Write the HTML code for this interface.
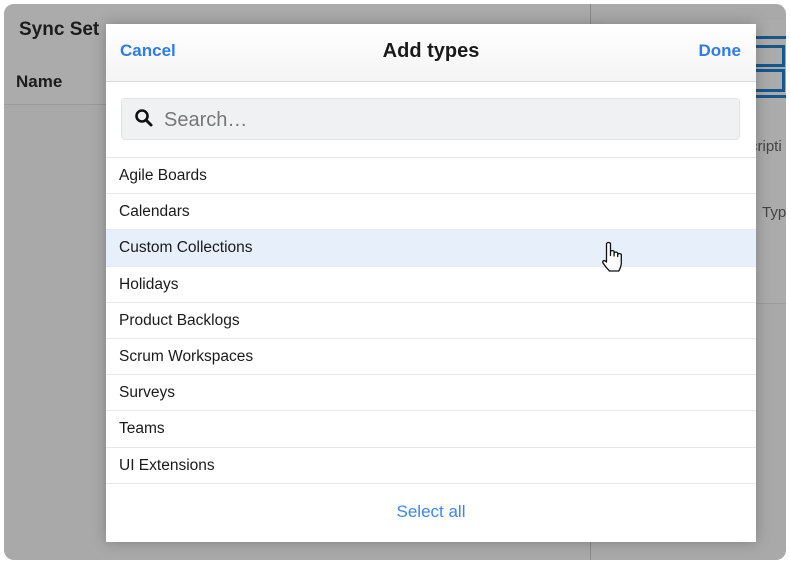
<!DOCTYPE html>
<html><head><meta charset="utf-8"><style>
*{margin:0;padding:0;box-sizing:border-box}
body{width:790px;height:564px;background:#fff;position:relative;overflow:hidden;font-family:"Liberation Sans",Arial,Helvetica,sans-serif}
.win{position:absolute;left:4px;top:4px;width:782px;height:556px;border-radius:10px;background:#a9a9a9;overflow:hidden}
.lh{position:absolute;left:0;top:0;width:586px;height:101px;background:#ababab;border-bottom:1px solid #9a9a9a}
.vl{position:absolute;left:586px;top:0;width:1px;height:556px;background:#8a8a8a}
.card{position:absolute;left:601px;top:16px;width:181px;height:284px;background:#ababab;border-bottom:1px solid #9d9d9d}
.t{position:absolute;color:#1c1c1c}
.bl{position:absolute;background:#17578a}
.bx{position:absolute;border:3px solid #17578a}
.modal{position:absolute;left:106px;top:24px;width:650px;height:518px;background:#fff;box-shadow:0 0 14px rgba(0,0,0,.25)}
.hd{height:58px;border-bottom:1px solid #d8d8d8;background:linear-gradient(#fff,#f4f4f4);position:relative}
.hd span{position:absolute;top:17px;font-size:17px;font-weight:bold;color:#2f7bea}
.hd .ti{left:0;width:650px;text-align:center;color:#1a1a1a;font-size:20px;top:16px}
.sb{position:absolute;left:15px;top:74px;width:619px;height:42px;background:#f0f1f3;border:1px solid #e3e4e6;border-radius:4px}
.sb span{position:absolute;left:42px;top:10px;font-size:20px;color:#777}
.list{position:absolute;left:0;top:133px;width:650px;border-top:1px solid #e6e6e6}
.row{height:36.2px;border-bottom:1px solid #e8e8e8;font-size:15.5px;color:#1a1a1a;padding:9px 0 0 13px}
.row.h{background:#e7effb}
.sa{position:absolute;left:0;top:478px;width:650px;text-align:center;font-size:17px;color:#3b86e8}
</style></head><body>
<div class="win">
<div class="lh"></div>
<div class="t" style="left:15px;top:15px;font-size:19px;font-weight:bold">Sync Set</div>
<div class="t" style="left:12px;top:68px;font-size:17px;font-weight:bold">Name</div>
<div class="vl"></div>
<div class="card"></div>
<div class="bl" style="left:740px;top:32px;width:42px;height:3px"></div>
<div class="bx" style="left:736px;top:41px;width:45px;height:22px"></div>
<div class="bx" style="left:736px;top:65px;width:45px;height:23px"></div>
<div class="bl" style="left:740px;top:91px;width:42px;height:3px"></div>
<div class="t" style="left:746px;top:134px;font-size:15px;color:#444">cripti</div>
<div class="t" style="left:758px;top:200px;font-size:15px;color:#444">Typ</div>
</div>
<div class="modal">
<div class="hd"><span style="left:14px">Cancel</span><span class="ti">Add types</span><span style="right:15px">Done</span></div>
<div class="sb"><svg style="position:absolute;left:12px;top:9px" width="20" height="20" viewBox="0 0 20 20"><circle cx="8" cy="8" r="5.5" fill="none" stroke="#111" stroke-width="2.6"/><line x1="12" y1="12" x2="17" y2="17" stroke="#111" stroke-width="3" stroke-linecap="round"/></svg><span>Search…</span></div>
<div class="list">
<div class="row">Agile Boards</div>
<div class="row">Calendars</div>
<div class="row h">Custom Collections</div>
<div class="row">Holidays</div>
<div class="row">Product Backlogs</div>
<div class="row">Scrum Workspaces</div>
<div class="row">Surveys</div>
<div class="row">Teams</div>
<div class="row">UI Extensions</div>
</div>
<div class="sa">Select all</div>
</div>
<svg style="position:absolute;left:600px;top:240px" width="30" height="34" viewBox="0 0 30 34"><path d="M6.5 4c0-2 4-2 4 0v11.5V12c0-1.8 3.6-1.8 3.6 0v4-2.5c0-1.8 3.6-1.8 3.6 0v3-1.5c0-1.8 3.6-1.8 3.6 0v8c0 3.5-1.5 6-2.5 8H9.5c-1.5-1.5-4.5-5-6.5-8-1-1.6.8-3.2 2.3-2l1.2 1V4z" fill="#fff" stroke="#111" stroke-width="1.3" stroke-linejoin="round"/></svg>
</body></html>
